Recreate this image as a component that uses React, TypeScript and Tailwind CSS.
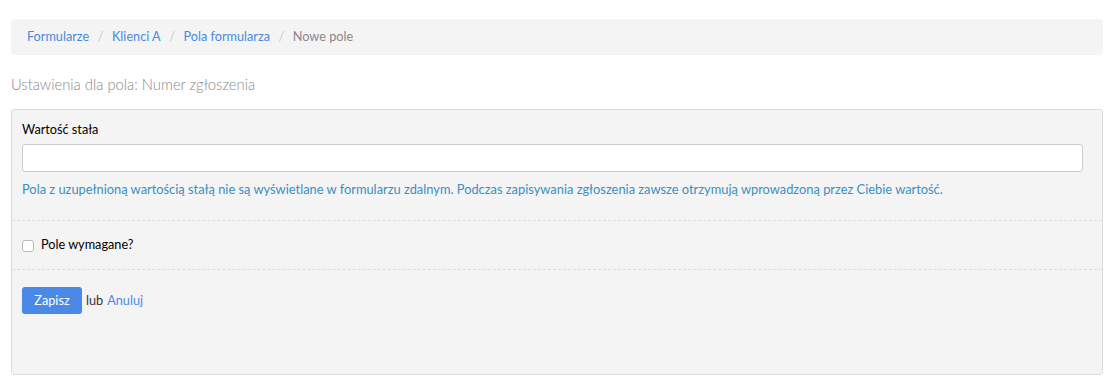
export default function App() {
  const crumbs = ["Formularze", "Klienci A", "Pola formularza"];

  return (
    <div className="bg-white min-h-[390px] pl-[11px] pr-[17px] pt-[19px] font-['Lato',sans-serif] text-[12.7px] text-[#333]">
      <nav className="h-9 flex items-center px-4 rounded bg-[#f4f4f4]">
        {crumbs.map((c) => (
          <span key={c} className="flex items-center">
            <a href="#" className="text-[#4a89e0]">{c}</a>
            <span className="px-[8.5px] text-[#ccc]">/</span>
          </span>
        ))}
        <span className="text-[#888]">Nowe pole</span>
      </nav>

      <h4 className="mt-[19px] text-[14.8px] font-light text-[#888] leading-5">Ustawienia dla pola: Numer zgłoszenia</h4>

      <div className="mt-[15px] h-[266px] border border-[#dcdcdc] rounded-[3px] bg-[#f4f4f4]">
        <div className="px-[10px] pr-[19px] pt-[9px] pb-[21px]">
          <label className="block text-black leading-5">Wartość stała</label>
          <input type="text" className="mt-[5px] block w-full h-7 border border-[#ccc] rounded-[3px] bg-white" />
          <p className="mt-[7px] text-[12.85px] text-[#3a8fc4] leading-5">
            Pola z uzupełnioną wartością stałą nie są wyświetlane w formularzu zdalnym. Podczas zapisywania zgłoszenia zawsze otrzymują wprowadzoną przez Ciebie wartość.
          </p>
        </div>
        <div className="border-t border-dashed border-[#dedede] px-[10px] h-[49px] flex items-center gap-[7px]">
          <span className="w-[12px] h-[12px] mt-[2px] rounded-[3px] border border-[#bbb] bg-white" />
          <span className="text-black">Pole wymagane?</span>
        </div>
        <div className="border-t border-dashed border-[#dedede] px-[10px] pt-[17px] flex items-center gap-1">
          <button className="w-[60px] h-[27px] rounded-[3px] bg-[#4a89e6] text-white">Zapisz</button>
          <span className="text-[#333]">lub</span>
          <a href="#" className="text-[#4a89e0]">Anuluj</a>
        </div>
      </div>
    </div>
  );
}
